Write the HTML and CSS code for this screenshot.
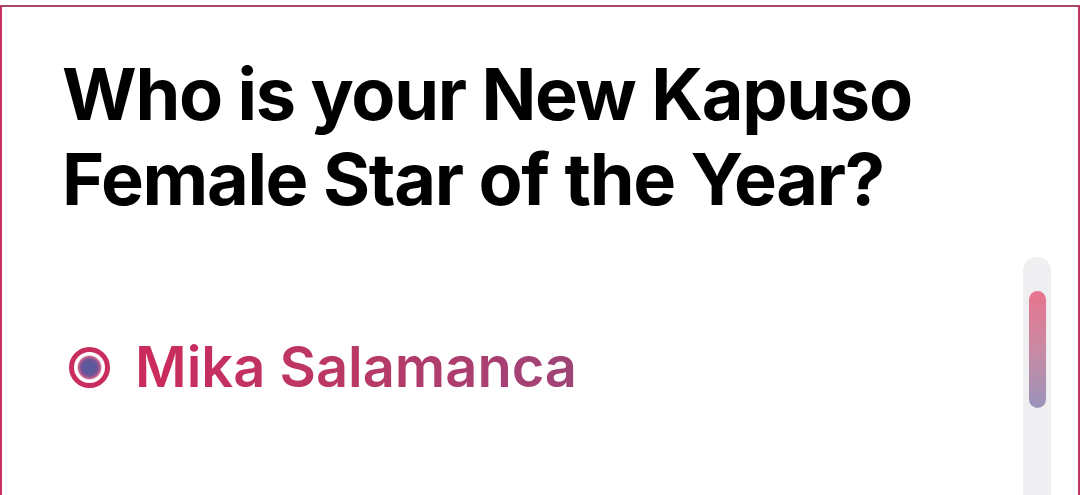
FILE: index.html
```html
<!DOCTYPE html>
<html lang="en">
<head>
<meta charset="utf-8">
<title>Poll</title>
<link rel="stylesheet" href="styles.css">
</head>
<body>
<div class="card">
  <h1 class="title">Who is your New Kapuso Female Star of the Year?</h1>
  <div class="body">
    <div class="options">
      <label class="option">
        <span class="radio"><span class="dot"></span></span>
        <span class="name">Mika Salamanca</span>
      </label>
    </div>
    <div class="track"><div class="thumb"></div></div>
  </div>
</div>
</body>
</html>
```
FILE: styles.css
```css
html, body {
  margin: 0;
  padding: 0;
  background: #ffffff;
  overflow: hidden;
}
body {
  font-family: Inter, "Noto Sans", "Liberation Sans", sans-serif;
  width: 1080px;
  height: 495px;
}
.card {
  margin-top: 5px;
  height: 490px;
  box-sizing: border-box;
  border: 2px solid #b73c65;
  border-top-color: #a8466b;
  border-left-color: #c6305f;
  border-right-color: #c0335f;
  border-bottom: 0;
  padding: 44px 27px 0 60px;
  display: flex;
  flex-direction: column;
}
.title {
  margin: 0;
  font-size: 72px;
  line-height: 85px;
  font-weight: 700;
  letter-spacing: -1.3px;
  color: #000000;
  width: 900px;
}
.body {
  flex: 1;
  display: flex;
  margin-top: 36px;
}
.options {
  flex: 1;
  padding-top: 76px;
}
.option {
  display: flex;
  align-items: center;
  margin-left: 7px;
  gap: 25px;
  height: 68px;
}
.radio {
  width: 41px;
  height: 41px;
  border-radius: 50%;
  border: 5px solid #c92d5e;
  box-sizing: border-box;
  display: flex;
  align-items: center;
  justify-content: center;
}
.dot {
  width: 25px;
  height: 25px;
  border-radius: 50%;
  background: radial-gradient(circle closest-side, #5a5a9e 0%, #5d589c 45%, #7a5296 68%, #c2638c 88%, rgba(240, 200, 215, 0.3) 100%);
}
.name {
  display: inline-block;
  font-size: 56px;
  line-height: 68px;
  font-weight: 600;
  background: linear-gradient(90deg, #cc2a5c 0%, #b83966 50%, #9e4478 100%);
  -webkit-background-clip: text;
  background-clip: text;
  color: transparent;
}
.track {
  width: 28px;
  border-radius: 14px 14px 0 0;
  background: #efeff1;
  padding-top: 34px;
  display: flex;
  justify-content: center;
  align-self: stretch;
}
.thumb {
  width: 17px;
  height: 117px;
  border-radius: 9px;
  background: linear-gradient(180deg, #e8748f 0%, #c98aa3 50%, #9b93bb 100%);
}
```
